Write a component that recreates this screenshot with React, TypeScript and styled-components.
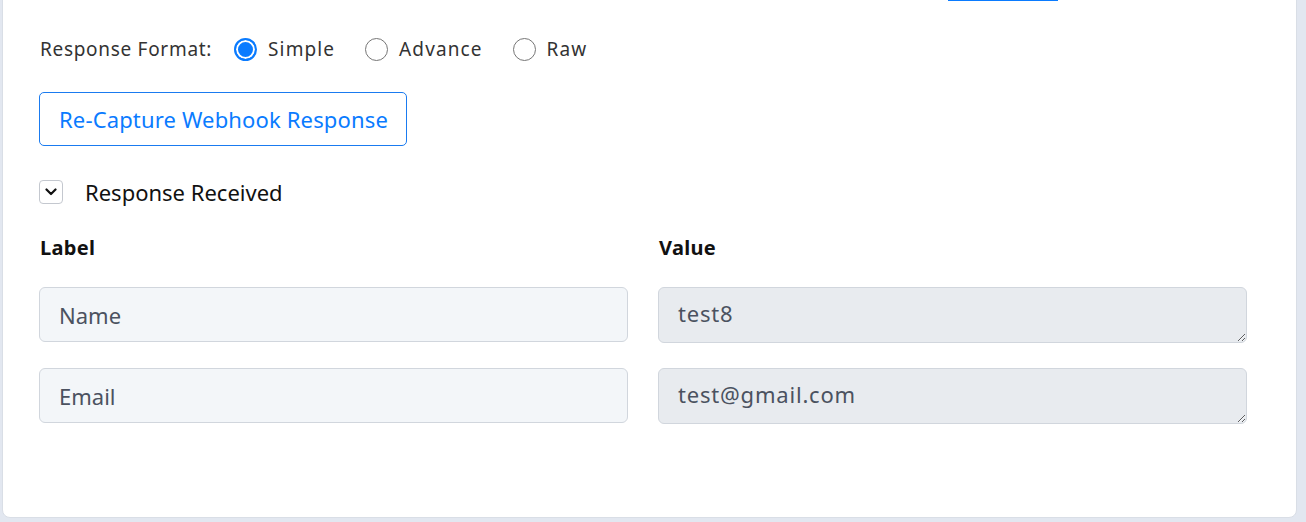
import { Fragment } from "react";
import { createGlobalStyle, styled } from "styled-components";

const GlobalStyle = createGlobalStyle`
    html, body {
        margin: 0;
        padding: 0;
        background: #e2e7f0;
        overflow: hidden;
    }
    body {
        font-family: "Noto Sans", Lato, sans-serif;
        color: #333;
    }
`;

export const Page = styled.div`
    display: flex;
    width: 1306px;
    height: 522px;
    overflow: hidden;
`;

export const Card = styled.div`
    display: flex;
    flex-direction: column;
    box-sizing: border-box;
    width: 1295px;
    height: 548px;
    margin: -30px 0 0 2px;
    padding: 3px 49px 0 36px;
    background: #fff;
    border: 1px solid #d9dee6;
    border-radius: 8px;
`;

export const Hint = styled.p`
    margin: 0;
    font-size: 19px;
    letter-spacing: 0.7px;
    line-height: 24px;
    color: #333;
    white-space: nowrap;
`;

export const HintLink = styled.a`
    color: #0a7bff;
    text-decoration: none;
    border-bottom: 2px solid #0a7bff;
`;

export const FormatRow = styled.div`
    display: flex;
    align-items: center;
    height: 24px;
    margin-top: 39px;
    margin-left: 1px;
    font-size: 19px;
    letter-spacing: 0.7px;
`;

export const FormatLabel = styled.span`
    margin-right: 22px;
    color: #333;
`;

export const Option = styled.label`
    display: flex;
    align-items: center;
    gap: 11px;
    margin-right: 30px;
    color: #333;
    cursor: pointer;
`;

export const OptionText = styled.span`
    letter-spacing: 1.1px;
`;

export interface IRadioProps {
    checked?: boolean
}

export const RadioDot = styled.span<IRadioProps>`
    box-sizing: border-box;
    width: 23px;
    height: 23px;
    border-radius: 50%;
    border: ${(props) => props.checked ? "2px solid #0a7bff" : "1.5px solid #767676"};
    background: ${(props) => props.checked ? "#0a7bff" : "#fff"};
    box-shadow: ${(props) => props.checked ? "inset 0 0 0 2px #fff" : "none"};
`;

export const CaptureButton = styled.button`
    align-self: flex-start;
    box-sizing: border-box;
    height: 54px;
    margin-top: 31px;
    padding: 0 18px 0 19px;
    background: #fff;
    border: 1px solid #1a7bf0;
    border-radius: 5px;
    font-family: inherit;
    font-size: 22px;
    letter-spacing: 0.15px;
    color: #0a7bff;
    cursor: pointer;
`;

export const ReceivedRow = styled.div`
    display: flex;
    align-items: center;
    gap: 22px;
    margin-top: 31px;
`;

export const ChevronBox = styled.span`
    display: flex;
    align-items: center;
    justify-content: center;
    box-sizing: border-box;
    width: 24px;
    height: 24px;
    border: 1px solid #c4c8cf;
    border-radius: 4px;
    background: #fff;
`;

export const ReceivedTitle = styled.span`
    font-size: 22px;
    color: #111;
`;

export const FieldGrid = styled.div`
    display: grid;
    grid-template-columns: 1fr 1fr;
    column-gap: 30px;
    row-gap: 25px;
    margin-top: 27px;
`;

export const ColumnHead = styled.div`
    height: 30px;
    font-size: 20px;
    font-weight: 700;
    letter-spacing: 0.3px;
    color: #111;
    margin-left: 1px;
    margin-bottom: -2px;
`;

export const LabelInput = styled.input`
    box-sizing: border-box;
    width: 100%;
    height: 55px;
    padding: 0 19px;
    background: #f3f6f9;
    border: 1px solid #d1d6dd;
    border-radius: 6px;
    font-family: inherit;
    font-size: 22px;
    color: #4b5260;
    outline: none;
`;

export const ValueArea = styled.textarea`
    display: block;
    box-sizing: border-box;
    width: 100%;
    height: 56px;
    padding: 10px 19px 0;
    background: #e8ebef;
    border: 1px solid #d1d6dd;
    border-radius: 6px;
    font-family: inherit;
    font-size: 22px;
    letter-spacing: 0.8px;
    line-height: 30px;
    color: #4b5260;
    resize: vertical;
    outline: none;
`;

const formats = ["Simple", "Advance", "Raw"];

const fields = [
    { label: "Name", value: "test8" },
    { label: "Email", value: "test@gmail.com" },
];

function App() {
    return (
        <Page>
            <GlobalStyle />
            <Card>
                <Hint>
                    Send a sample request to the webhook URL, then capture the response to map fields properly.{" "}
                    <HintLink href="#">Learn More</HintLink>
                </Hint>

                <FormatRow>
                    <FormatLabel>Response Format:</FormatLabel>
                    {formats.map((f) => (
                        <Option key={f}>
                            <RadioDot checked={f === "Simple"} />
                            <OptionText>{f}</OptionText>
                        </Option>
                    ))}
                </FormatRow>

                <CaptureButton>Re-Capture Webhook Response</CaptureButton>

                <ReceivedRow>
                    <ChevronBox>
                        <svg width="12" height="8" viewBox="0 0 12 8">
                            <path d="M1.5 1.5 L6 6 L10.5 1.5" fill="none" stroke="#111" strokeWidth="2.2" strokeLinecap="round" strokeLinejoin="round" />
                        </svg>
                    </ChevronBox>
                    <ReceivedTitle>Response Received</ReceivedTitle>
                </ReceivedRow>

                <FieldGrid>
                    <ColumnHead>Label</ColumnHead>
                    <ColumnHead>Value</ColumnHead>
                    {fields.map((f) => (
                        <Fragment key={f.label}>
                            <LabelInput readOnly value={f.label} />
                            <ValueArea readOnly value={f.value} />
                        </Fragment>
                    ))}
                </FieldGrid>
            </Card>
        </Page>
    );
}

export default App;
